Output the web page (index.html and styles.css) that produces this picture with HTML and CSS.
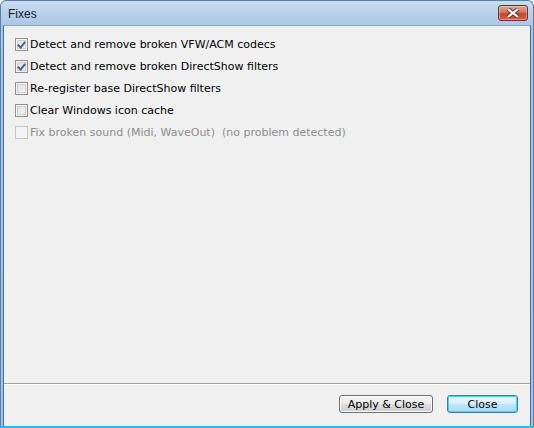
FILE: index.html
```html
<!DOCTYPE html>
<html>
<head>
<meta charset="utf-8">
<link rel="stylesheet" href="styles.css">
</head>
<body>
<div class="window">
  <div class="titlebar">
    <span class="title">Fixes</span>
    <div class="close-btn">
      <svg width="14" height="10" viewBox="0 0 14 10">
        <path d="M2 1 L12 9 M12 1 L2 9" stroke="#5a2a2a" stroke-width="4" stroke-linecap="butt"/>
        <path d="M2 1 L12 9 M12 1 L2 9" stroke="#ffffff" stroke-width="2.2" stroke-linecap="butt"/>
      </svg>
    </div>
  </div>
  <div class="client">
    <div class="options">
      <label class="opt"><span class="box checked"></span><span class="lbl">Detect and remove broken VFW/ACM codecs</span></label>
      <label class="opt"><span class="box checked"></span><span class="lbl">Detect and remove broken DirectShow filters</span></label>
      <label class="opt"><span class="box"></span><span class="lbl">Re-register base DirectShow filters</span></label>
      <label class="opt"><span class="box"></span><span class="lbl">Clear Windows icon cache</span></label>
      <label class="opt disabled"><span class="box"></span><span class="lbl">Fix broken sound (Midi, WaveOut)&nbsp; (no problem detected)</span></label>
    </div>
    <div class="footer">
      <button class="btn">Apply &amp; Close</button>
      <button class="btn default">Close</button>
    </div>
  </div>
</div>
</body>
</html>
```
FILE: styles.css
```css
html, body {
  margin: 0;
  padding: 0;
  width: 534px;
  height: 428px;
  overflow: hidden;
  font-family: "DejaVu Sans", sans-serif;
  font-size: 11px;
}
.window {
  box-sizing: border-box;
  width: 534px;
  height: 428px;
  display: flex;
  flex-direction: column;
  background: linear-gradient(#c9dcf0 0px, #b6cfe9 14px, #a9c6e6 26px, #a3c2e4 100%);
  border: 1px solid #5b7ea3;
  border-radius: 6px 6px 0 0;
  border-bottom: 2px solid #2bbbe8;
}
.titlebar {
  height: 24px;
  display: flex;
  align-items: center;
  justify-content: space-between;
  padding: 0 5px 0 7px;
  flex: none;
}
.title {
  font-family: "Liberation Sans", sans-serif;
  font-size: 12px;
  color: #1a1a2e;
  padding-top: 2px;
}
.close-btn {
  width: 30px;
  height: 16px;
  box-sizing: border-box;
  border: 1px solid #6e2b2b;
  border-radius: 3px;
  background: linear-gradient(#e6a596 0%, #d2755f 45%, #c1482c 55%, #d1663e 100%);
  display: flex;
  align-items: center;
  justify-content: center;
  box-shadow: inset 0 0 0 1px rgba(255,255,255,0.35);
}
.client {
  flex: 1;
  margin: 0 2px 0 2px;
  background: #f0f0f0;
  border-top: 1px solid #8aa4c4;
  border-left: 1px solid #3a6ea5;
  border-right: 1px solid #3a6ea5;
  display: flex;
  flex-direction: column;
}
.options {
  flex: 1;
  padding: 12px 0 0 11px;
  display: flex;
  flex-direction: column;
  gap: 9px;
}
.opt {
  display: flex;
  align-items: center;
  gap: 2px;
  height: 13px;
  color: #000;
}
.box {
  width: 13px;
  height: 13px;
  box-sizing: border-box;
  border: 1px solid #8e8f8f;
  background: linear-gradient(135deg, #dcdcdc, #f8f8f8);
  box-shadow: inset 0 0 0 1px #f4f4f4, inset 0 0 0 2px #cfcfcf;
  position: relative;
  flex: none;
}
.box.checked::after {
  content: "";
  position: absolute;
  left: 3px;
  top: 1px;
  width: 3px;
  height: 6px;
  border-right: 2px solid #4a5f97;
  border-bottom: 2px solid #4a5f97;
  transform: rotate(40deg);
}
.opt.disabled { color: #8d8d8d; }
.opt.disabled .box {
  border-color: #c5c5c5;
  background: #f4f4f4;
  box-shadow: none;
}
.footer {
  flex: none;
  box-sizing: border-box;
  height: 43px;
  border-top: 1px solid #a0a0a0;
  box-shadow: inset 0 1px 0 #ffffff;
  display: flex;
  justify-content: flex-end;
  align-items: flex-start;
  gap: 14px;
  padding: 11px 12px 0 0;
}
.btn {
  font-family: "DejaVu Sans", sans-serif;
  font-size: 11px;
  color: #000;
  height: 18px;
  width: 94px;
  padding: 0;
  border: 1px solid #707070;
  border-radius: 3px;
  background: linear-gradient(#f2f2f2 0%, #ebebeb 50%, #dddddd 51%, #cfcfcf 100%);
  box-shadow: inset 0 0 0 1px #fbfbfb;
}
.btn.default {
  width: 71px;
  border-color: #3c7fb1;
  background: linear-gradient(#eaf6fd 0%, #d9f0fc 50%, #bee6fd 51%, #a7d9f5 100%);
  box-shadow: inset 0 0 0 1px #48d4f8;
}
```
